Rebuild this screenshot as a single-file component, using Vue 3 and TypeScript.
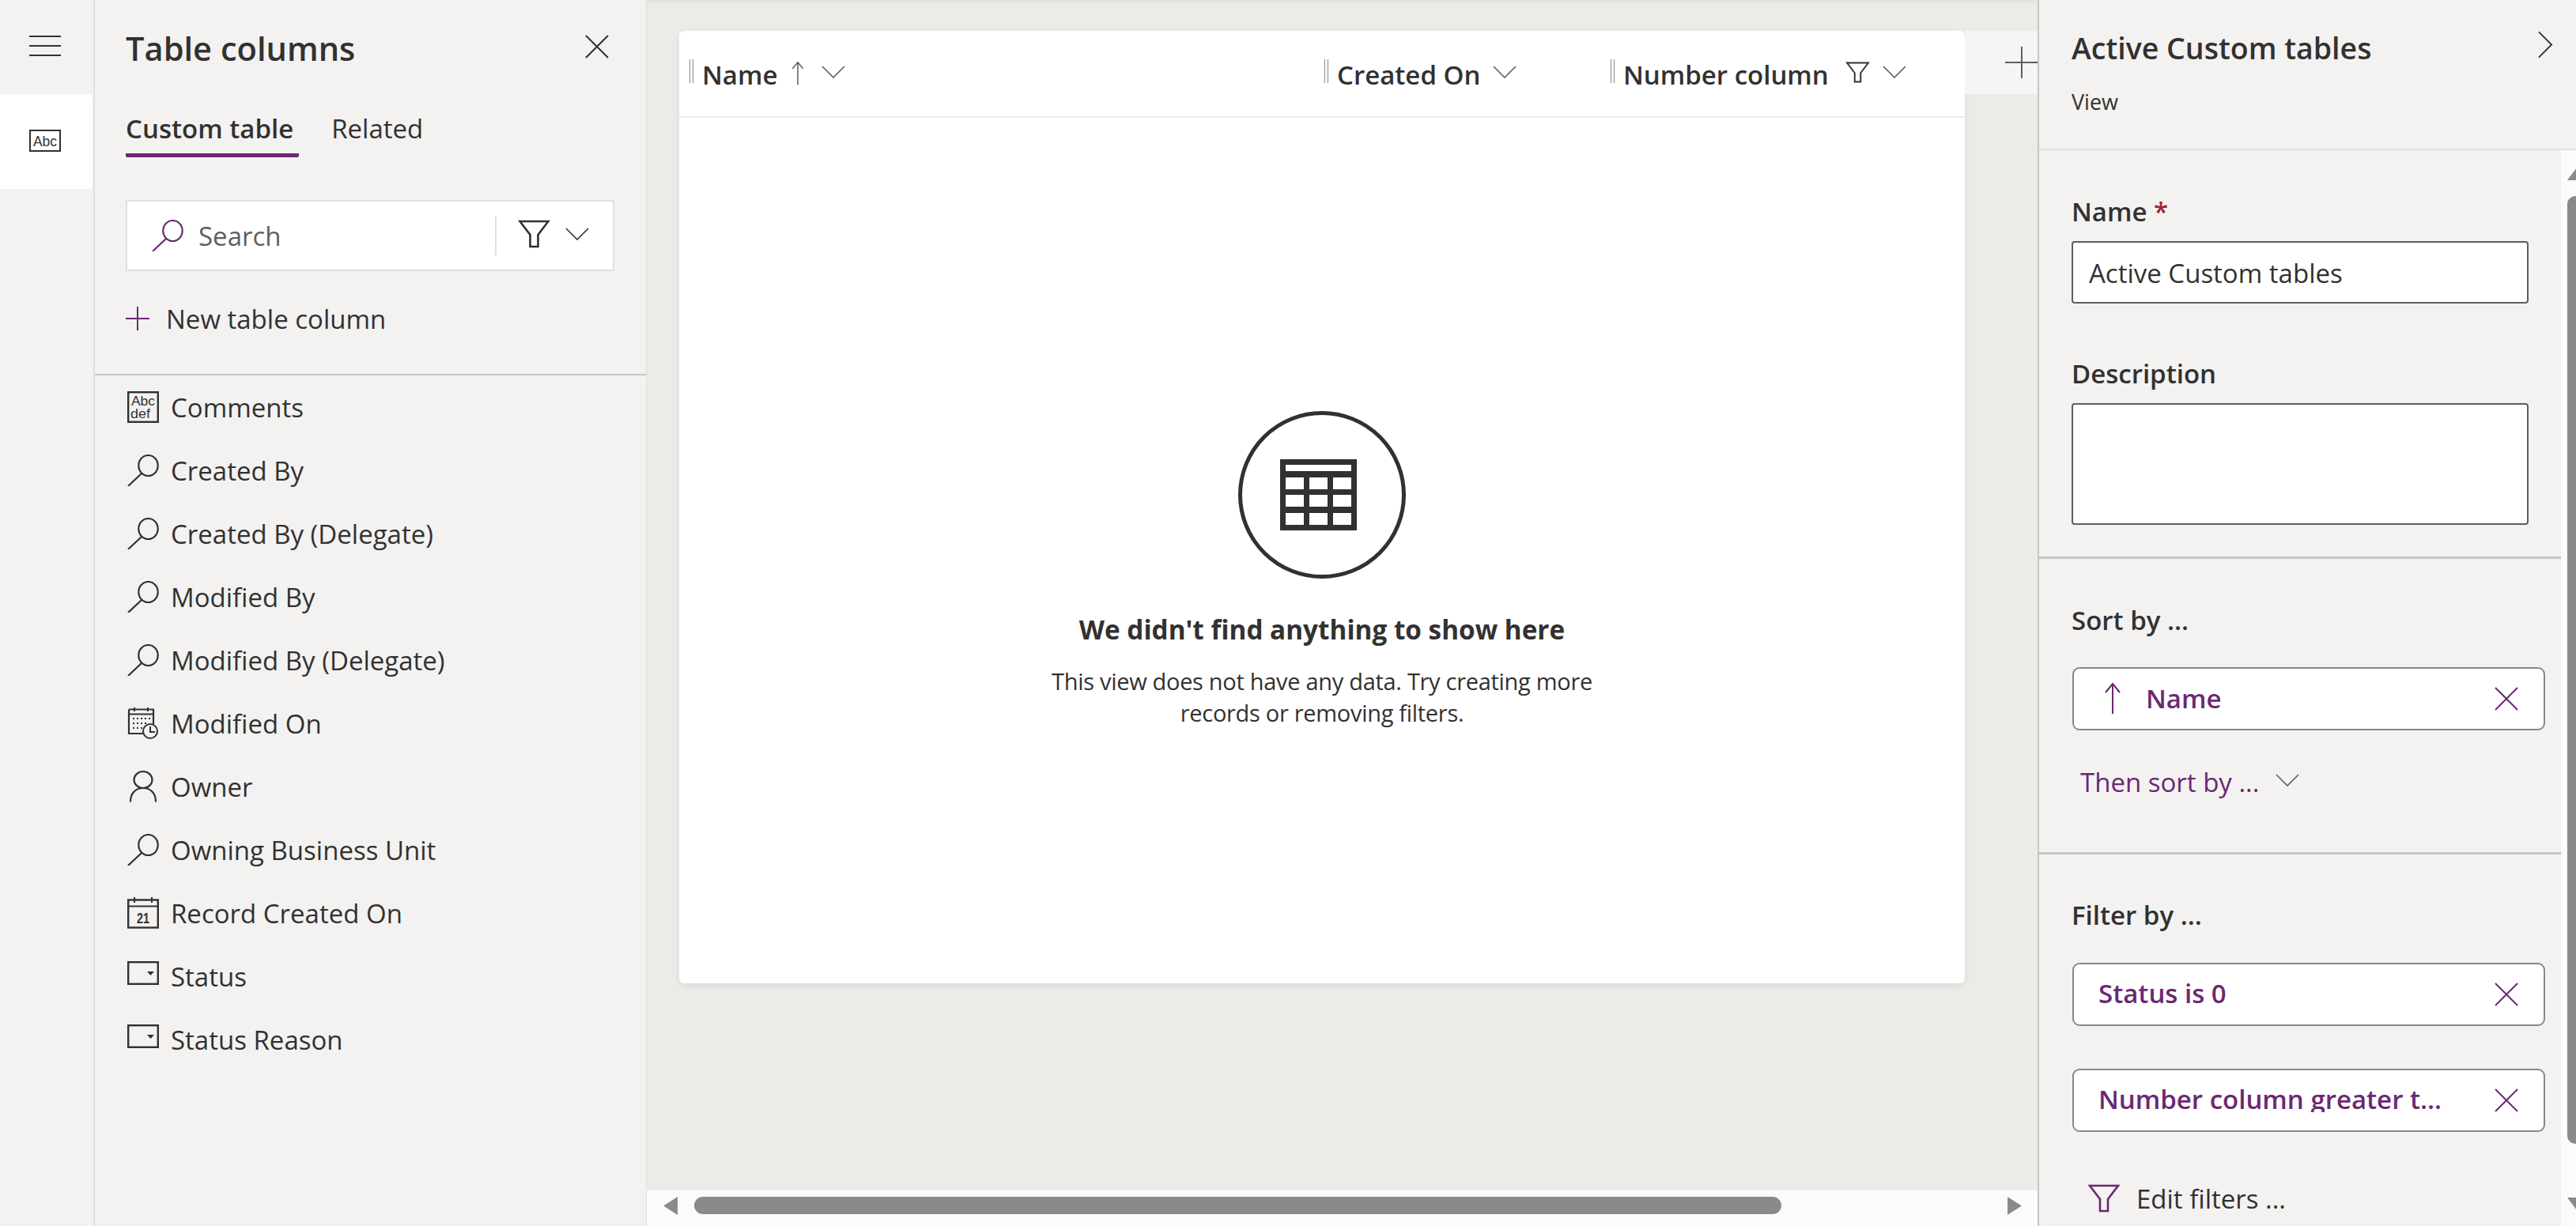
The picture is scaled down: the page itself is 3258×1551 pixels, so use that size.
<script setup lang="ts">
const columns = [
  { name: 'Comments', icon: 'textarea' },
  { name: 'Created By', icon: 'i-lookup' },
  { name: 'Created By (Delegate)', icon: 'i-lookup' },
  { name: 'Modified By', icon: 'i-lookup' },
  { name: 'Modified By (Delegate)', icon: 'i-lookup' },
  { name: 'Modified On', icon: 'i-calclock' },
  { name: 'Owner', icon: 'i-person' },
  { name: 'Owning Business Unit', icon: 'i-lookup' },
  { name: 'Record Created On', icon: 'calendar' },
  { name: 'Status', icon: 'i-dropdown' },
  { name: 'Status Reason', icon: 'i-dropdown' },
];

const gridCols = [
  { name: 'Name', sorted: true, filtered: false },
  { name: 'Created On', sorted: false, filtered: false },
  { name: 'Number column', sorted: false, filtered: true },
];

const filters = ['Status is 0', 'Number column greater than 0'];
</script>

<template>
  <div class="app">
    <svg class="sprite" width="0" height="0">
      <symbol id="i-lookup" viewBox="0 0 40 40">
        <ellipse cx="26.5" cy="14" rx="12.2" ry="13" fill="none" stroke="currentColor" stroke-width="2.2" />
        <path d="M18 24 1 40" fill="none" stroke="currentColor" stroke-width="2.2" />
      </symbol>
      <symbol id="i-calclock" viewBox="0 0 40 40">
        <path d="M2 2.5H33V21M2 2.5V33H20" fill="none" stroke="currentColor" stroke-width="2.2" />
        <path d="M2 8.5H33M9 0V5M26 0V5" fill="none" stroke="currentColor" stroke-width="2" />
        <path d="M7 14h2M12 14h2M17 14h2M22 14h2M27 14h2M7 20h2M12 20h2M17 20h2M22 20h2M7 26h2M12 26h2M17 26h2" stroke="currentColor" stroke-width="2" />
        <circle cx="29" cy="30" r="9" fill="#f3f2f1" stroke="currentColor" stroke-width="2" />
        <path d="M29 24v7h6" fill="none" stroke="currentColor" stroke-width="2" />
      </symbol>
      <symbol id="i-person" viewBox="0 0 40 40">
        <ellipse cx="20" cy="11.5" rx="11.5" ry="10.5" fill="none" stroke="currentColor" stroke-width="2.2" />
        <path d="M4 39.5C4 29 10 22 20 22S36 29 36 39.5" fill="none" stroke="currentColor" stroke-width="2.2" />
      </symbol>
      <symbol id="i-dropdown" viewBox="0 0 40 30">
        <rect x="1.2" y="1.2" width="37.6" height="27.6" fill="none" stroke="currentColor" stroke-width="2.4" />
        <path d="M25 13h9l-4.5 5z" fill="currentColor" />
      </symbol>
      <symbol id="i-funnel" viewBox="0 0 40 36">
        <path d="M2 2H38L25 19V34H15V19Z" fill="none" stroke="currentColor" stroke-width="2.6" />
      </symbol>
      <symbol id="i-chev" viewBox="0 0 30 16">
        <path d="M1 1 15 15 29 1" fill="none" stroke="currentColor" stroke-width="1.6" />
      </symbol>
      <symbol id="i-x" viewBox="0 0 30 30">
        <path d="M1 1 29 29M29 1 1 29" fill="none" stroke="currentColor" stroke-width="2" />
      </symbol>
      <symbol id="i-up" viewBox="0 0 20 40">
        <path d="M10 39V2M1 12 10 1 19 12" fill="none" stroke="currentColor" stroke-width="2" />
      </symbol>
    </svg>

    <nav class="rail">
      <button class="rail-btn" type="button" aria-label="Menu">
        <span class="burger" />
      </button>
      <div class="rail-item">
        <svg class="abc" viewBox="0 0 40 28">
          <rect x="1" y="1" width="38" height="26" fill="#fff" stroke="currentColor" stroke-width="2" />
          <text x="5" y="21" font-size="19" textLength="30" lengthAdjust="spacingAndGlyphs" fill="currentColor">Abc</text>
        </svg>
      </div>
    </nav>

    <aside class="panel">
      <header class="panel-head">
        <h1>Table columns</h1>
        <svg class="close"><use href="#i-x" /></svg>
      </header>
      <div class="tabs">
        <span class="tab active">Custom table</span>
        <span class="tab">Related</span>
      </div>
      <div class="search">
        <svg class="search-icon"><use href="#i-lookup" /></svg>
        <span class="search-text">Search</span>
        <span class="search-sep" />
        <svg class="search-funnel"><use href="#i-funnel" /></svg>
        <svg class="search-chev"><use href="#i-chev" /></svg>
      </div>
      <div class="new-col">
        <span class="plus" />
        <span>New table column</span>
      </div>
      <ul class="col-list">
        <li v-for="c in columns" :key="c.name" class="col-row">
          <span class="col-icon">
            <svg v-if="c.icon === 'textarea'" viewBox="0 0 40 40">
              <rect x="1.2" y="1.2" width="37.6" height="37.6" fill="none" stroke="currentColor" stroke-width="2.4" />
              <text x="5" y="18" font-size="17" textLength="30" lengthAdjust="spacingAndGlyphs" fill="currentColor">Abc</text>
              <text x="4" y="34" font-size="17" textLength="25" lengthAdjust="spacingAndGlyphs" fill="currentColor">def</text>
            </svg>
            <svg v-else-if="c.icon === 'calendar'" viewBox="0 0 40 40">
              <rect x="1.2" y="3.5" width="37.6" height="35" fill="none" stroke="currentColor" stroke-width="2.4" />
              <path d="M1 11.5H39M9 0V7M31 0V7" fill="none" stroke="currentColor" stroke-width="2" />
              <text x="12" y="33" font-size="18" font-weight="700" textLength="16" lengthAdjust="spacingAndGlyphs" fill="currentColor">21</text>
            </svg>
            <svg v-else :class="c.icon"><use :href="'#' + c.icon" /></svg>
          </span>
          <span class="col-name">{{ c.name }}</span>
        </li>
      </ul>
    </aside>

    <main class="main">
      <div class="canvas">
        <section class="card">
          <div class="grid-head">
            <div v-for="g in gridCols" :key="g.name" class="grid-col">
              <span class="grip" />
              <span class="grid-name">{{ g.name }}</span>
              <svg v-if="g.sorted" class="grid-up"><use href="#i-up" /></svg>
              <svg v-if="g.filtered" class="grid-funnel"><use href="#i-funnel" /></svg>
              <svg class="grid-chev"><use href="#i-chev" /></svg>
            </div>
          </div>
          <div class="empty">
            <div class="empty-circle">
              <div class="empty-table">
                <span class="cell wide" />
                <span v-for="n in 9" :key="n" class="cell" />
              </div>
            </div>
            <h2>We didn't find anything to show here</h2>
            <p>This view does not have any data. Try creating more<br />records or removing filters.</p>
          </div>
        </section>
        <div class="add-col"><span class="add-plus" /></div>
      </div>
      <div class="hscroll">
        <span class="arrow-left" />
        <span class="hthumb" />
        <span class="arrow-right" />
      </div>
    </main>

    <aside class="props">
      <header class="props-head">
        <div class="props-title">
          <h1>Active Custom tables</h1>
          <svg class="collapse" viewBox="0 0 20 36"><path d="M1 1 18 18 1 35" fill="none" stroke="currentColor" stroke-width="2" /></svg>
        </div>
        <div class="props-sub">View</div>
      </header>
      <div class="props-body">
        <div class="props-content">
          <section class="sec">
            <label class="label">Name <span class="req">*</span></label>
            <div class="input">Active Custom tables</div>
            <label class="label desc">Description</label>
            <div class="textarea" />
          </section>
          <section class="sec sort">
            <div class="label">Sort by ...</div>
            <div class="pill">
              <svg class="pill-up"><use href="#i-up" /></svg>
              <span class="pill-text">Name</span>
              <svg class="pill-x"><use href="#i-x" /></svg>
            </div>
            <div class="then">
              <span>Then sort by ...</span>
              <svg class="then-chev"><use href="#i-chev" /></svg>
            </div>
          </section>
          <section class="sec filter">
            <div class="label">Filter by ...</div>
            <div v-for="f in filters" :key="f" class="pill filter-pill">
              <span class="pill-text clip">{{ f }}</span>
              <svg class="pill-x"><use href="#i-x" /></svg>
            </div>
            <div class="edit">
              <svg class="edit-funnel"><use href="#i-funnel" /></svg>
              <span>Edit filters ...</span>
            </div>
          </section>
        </div>
        <div class="vscroll">
          <span class="arrow-up" />
          <span class="vthumb" />
          <span class="arrow-down" />
        </div>
      </div>
    </aside>
  </div>
</template>

<style>
html,
body {
  margin: 0;
  background: #f3f2f1;
}
</style>

<style scoped>
.app {
  display: flex;
  width: 3258px;
  height: 1551px;
  overflow: hidden;
  font-family: 'Open Sans', 'Liberation Sans', sans-serif;
  font-size: 33px;
  color: #323130;
  background: #f3f2f1;
}
.sprite {
  position: absolute;
}
svg {
  display: block;
  flex: none;
}
h1,
h2,
p,
ul {
  margin: 0;
  padding: 0;
}

/* left rail */
.rail {
  flex: none;
  width: 118px;
  border-right: 2px solid #e1dfdd;
}
.rail-btn {
  display: flex;
  align-items: center;
  width: 100%;
  height: 119px;
  padding: 0 0 0 37px;
  background: none;
  border: none;
}
.burger {
  display: block;
  width: 40px;
  height: 26px;
  margin-top: -3px;
  border-top: 2px solid #323130;
  border-bottom: 2px solid #323130;
  background: linear-gradient(#323130, #323130) center / 100% 2px no-repeat;
  box-sizing: border-box;
}
.rail-item {
  display: flex;
  align-items: center;
  width: 117px;
  height: 120px;
  padding-left: 37px;
  box-sizing: border-box;
  background: #fff;
  border-radius: 0 5px 5px 0;
}
.abc {
  width: 40px;
  height: 28px;
  margin-top: -2px;
  font-family: 'Liberation Sans', sans-serif;
}

/* columns panel */
.panel {
  flex: none;
  width: 658px;
  padding-left: 39px;
  border-right: 1px solid #e1dfdd;
}
.panel-head {
  display: flex;
  align-items: center;
  justify-content: space-between;
  height: 50px;
  margin-top: 36px;
  padding-right: 47px;
}
.panel-head h1 {
  font-size: 41.6px;
  font-weight: 600;
  line-height: 50px;
}
.close {
  width: 30px;
  height: 30px;
  margin-top: -4px;
}
.tabs {
  display: flex;
  gap: 41px;
  margin-top: 57px;
}
.tab {
  height: 40px;
  padding-bottom: 11px;
  line-height: 40px;
  border-bottom: 5px solid transparent;
  border-radius: 2px;
}
.tab.active {
  padding-right: 7px;
  font-weight: 600;
  border-bottom-color: #6b2873;
}
.search {
  display: flex;
  align-items: center;
  box-sizing: border-box;
  width: 618px;
  height: 90px;
  margin-top: 54px;
  padding-left: 31px;
  background: #fff;
  border: 2px solid #e1dfdd;
}
.search-icon {
  width: 40px;
  height: 40px;
  color: #6b2873;
}
.search-text {
  margin-left: 19px;
  color: #605e5c;
}
.search-sep {
  width: 2px;
  height: 50px;
  margin-left: auto;
  background: #e1dfdd;
}
.search-funnel {
  width: 41px;
  height: 36px;
  margin-left: 27px;
  margin-top: -4px;
}
.search-chev {
  width: 30px;
  height: 16px;
  margin: -4px 30px 0 19px;
}
.new-col {
  display: flex;
  align-items: center;
  gap: 21px;
  height: 40px;
  margin-top: 40px;
}
.plus {
  display: block;
  width: 30px;
  height: 30px;
  background:
    linear-gradient(#6b2873, #6b2873) center / 100% 2px no-repeat,
    linear-gradient(#6b2873, #6b2873) center / 2px 100% no-repeat;
}
.col-list {
  margin: 50px 0 0 -39px;
  padding-left: 41px;
  list-style: none;
  border-top: 2px solid #c8c6c4;
}
.col-row {
  display: flex;
  align-items: center;
  height: 80px;
}
.col-icon {
  display: flex;
  justify-content: center;
  width: 40px;
  height: 40px;
  align-items: flex-start;
  font-family: 'Liberation Sans', sans-serif;
}
.col-icon svg {
  width: 40px;
  height: 40px;
}
.col-icon .i-dropdown {
  height: 30px;
  margin-top: 1px;
}
.col-name {
  margin: 1px 0 0 15px;
}

/* canvas */
.main {
  display: flex;
  flex: 1;
  flex-direction: column;
  min-width: 0;
}
.canvas {
  display: flex;
  flex: 1;
  align-items: flex-start;
  padding: 39px 0 0 41px;
  background: #ecebe8;
  box-shadow: inset 0 5px 5px -3px rgba(0, 0, 0, 0.05);
}
.card {
  flex: none;
  width: 1626px;
  height: 1205px;
  background: #fff;
  border-radius: 6px;
  box-shadow: 0 3px 8px rgba(0, 0, 0, 0.08);
}
.grid-head {
  display: grid;
  grid-template-columns: 803px 362px 1fr;
  height: 108px;
  padding-left: 13px;
  border-bottom: 2px solid #edebe9;
}
.grid-col {
  display: flex;
  align-items: center;
}
.grip {
  width: 5px;
  height: 30px;
  margin-top: -6px;
  border-left: 1px solid #8a8886;
  border-right: 1px solid #8a8886;
  box-sizing: border-box;
}
.grid-name {
  margin-left: 11px;
  margin-top: 2px;
  font-weight: 600;
}
.grid-up {
  width: 20px;
  height: 30px;
  margin: 0 4px 0 15px;
  color: #605e5c;
}
.grid-funnel {
  width: 31px;
  height: 27px;
  margin-left: 21px;
  margin-top: -4px;
}
.grid-chev {
  width: 30px;
  height: 16px;
  margin-left: 16px;
  margin-top: -4px;
  color: #605e5c;
}
.empty {
  display: flex;
  flex-direction: column;
  align-items: center;
  padding-top: 371px;
  text-align: center;
}
.empty-circle {
  display: flex;
  align-items: center;
  justify-content: center;
  box-sizing: border-box;
  width: 212px;
  height: 212px;
  padding-right: 10px;
  border: 5px solid #323130;
  border-radius: 50%;
}
.empty-table {
  display: grid;
  grid-template-columns: repeat(3, 23px);
  grid-template-rows: 8px repeat(3, 15px);
  gap: 7.5px 7px;
  padding: 7px 7px 7.5px;
  background: #323130;
}
.cell {
  background: #fff;
}
.cell.wide {
  grid-column: 1 / 4;
}
.empty h2 {
  margin-top: 42px;
  font-size: 33.3px;
  font-weight: 700;
  line-height: 44px;
}
.empty p {
  margin-top: 24px;
  font-size: 29px;
  letter-spacing: -0.3px;
  line-height: 40px;
}
.add-col {
  display: flex;
  flex: 1;
  justify-content: flex-end;
  height: 80px;
  background: #f6f5f4;
}
.add-plus {
  display: block;
  width: 41px;
  height: 40px;
  margin-top: 20px;
  background:
    linear-gradient(#605e5c, #605e5c) center / 100% 2px no-repeat,
    linear-gradient(#605e5c, #605e5c) 20px 0 / 2px 100% no-repeat;
}
.hscroll {
  display: flex;
  flex: none;
  align-items: flex-start;
  height: 37px;
  padding: 8px 0 0 21px;
  background: #fbfbfb;
}
.arrow-left,
.arrow-right,
.hthumb,
.vthumb,
.arrow-up,
.arrow-down {
  display: block;
  background: #8a8a8a;
}
.arrow-left {
  width: 18px;
  height: 23px;
  clip-path: polygon(100% 0, 0 50%, 100% 100%);
}
.hthumb {
  width: 1375px;
  height: 22px;
  margin-left: 21px;
  border-radius: 11px;
}
.arrow-right {
  width: 18px;
  height: 23px;
  margin-left: 286px;
  clip-path: polygon(0 0, 100% 50%, 0 100%);
}

/* properties panel */
.props {
  display: flex;
  flex: none;
  flex-direction: column;
  width: 679px;
  border-left: 2px solid #c8c6c4;
}
.props-head {
  flex: none;
  box-sizing: border-box;
  height: 190px;
  padding: 36px 29px 0 41px;
  border-bottom: 2px solid #e1dfdd;
}
.props-title {
  display: flex;
  align-items: center;
  justify-content: space-between;
  height: 50px;
}
.props-title h1 {
  font-size: 37.5px;
  font-weight: 600;
  line-height: 50px;
}
.collapse {
  width: 19px;
  height: 35px;
  margin-top: -10px;
}
.props-sub {
  margin-top: 26px;
  font-size: 27px;
  line-height: 34px;
}
.props-body {
  display: flex;
  flex: 1;
  min-height: 0;
}
.props-content {
  flex: none;
  width: 660px;
  overflow: hidden;
}
.sec {
  padding-left: 41px;
}
.sec:first-child {
  padding-top: 60px;
  padding-bottom: 40px;
}
.sort {
  padding-top: 60px;
  padding-bottom: 66px;
  border-top: 3px solid #c8c6c4;
}
.filter {
  padding-top: 59px;
  border-top: 3px solid #c8c6c4;
}
.label {
  display: block;
  margin-top: -2px;
  font-weight: 600;
  line-height: 40px;
}
.req {
  color: #a4262c;
}
.input,
.textarea {
  box-sizing: border-box;
  width: 578px;
  margin-top: 17px;
  background: #fff;
  border: 2px solid #605e5c;
  border-radius: 4px;
}
.input {
  height: 79px;
  padding-left: 20px;
  line-height: 77px;
}
.label.desc {
  margin-top: 69px;
}
.textarea {
  height: 154px;
}
.pill {
  display: flex;
  align-items: center;
  box-sizing: border-box;
  width: 598px;
  height: 80px;
  margin: 39px 0 0 1px;
  padding-right: 32px;
  background: #fff;
  border: 2px solid #8a8886;
  border-radius: 9px;
  color: #6b2873;
  font-weight: 600;
}
.pill-up {
  width: 20px;
  height: 40px;
  margin: 0 32px 0 39px;
}
.pill-text {
  flex: 1;
  min-width: 0;
  line-height: 40px;
}
.pill-text.clip {
  align-self: flex-start;
  height: 36px;
  margin: 17px 0 0 31px;
  overflow: hidden;
  white-space: nowrap;
  text-overflow: ellipsis;
}
.pill-x {
  width: 30px;
  height: 30px;
  margin-left: 24px;
}
.filter-pill {
  margin-top: 40px;
}
.filter-pill .pill-x {
  margin-left: 50px;
}
.filter-pill + .filter-pill {
  margin-top: 54px;
}
.then {
  display: flex;
  align-items: center;
  gap: 21px;
  height: 40px;
  margin: 45px 0 3px 11px;
  color: #6b2873;
}
.then-chev {
  width: 30px;
  height: 16px;
  margin-top: -4px;
  color: #605e5c;
}
.edit {
  display: flex;
  align-items: center;
  gap: 21px;
  height: 40px;
  margin: 64px 0 0 21px;
}
.edit-funnel {
  width: 40px;
  height: 36px;
  color: #6b2873;
}
.vscroll {
  display: flex;
  flex: none;
  flex-direction: column;
  width: 19px;
  padding-top: 22px;
  overflow: hidden;
  background: #fbfbfb;
}
.arrow-up,
.arrow-down {
  flex: none;
  width: 24px;
  height: 16px;
  margin-left: 8px;
}
.arrow-up {
  clip-path: polygon(50% 0, 100% 100%, 0 100%);
}
.arrow-down {
  margin-top: 68px;
  clip-path: polygon(0 0, 100% 0, 50% 100%);
}
.vthumb {
  flex: none;
  width: 20px;
  height: 1199px;
  margin: 20px 0 0 8px;
  border-radius: 10px;
}
</style>
